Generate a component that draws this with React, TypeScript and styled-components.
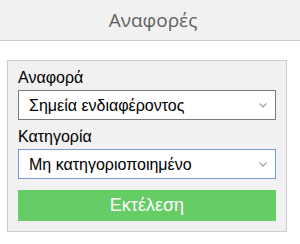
import React from "react";
import styled, { createGlobalStyle } from "styled-components";

const Global = createGlobalStyle`
  html, body { margin: 0; padding: 0; background: #ffffff; }
  body { font-family: "Liberation Sans", Arial, sans-serif; }
  * { box-sizing: border-box; }
`;

const Page = styled.div`
  width: 300px;
  height: 244px;
  display: flex;
  flex-direction: column;
  background: #ffffff;
`;

const Header = styled.header`
  height: 41px;
  background: #f1f1f1;
  border-bottom: 1px solid #cccccc;
  display: flex;
  align-items: center;
  justify-content: center;
  font-family: "Open Sans", sans-serif;
  font-size: 19px;
  color: #606060;
  padding: 0 0 1px 6px;
`;

const Panel = styled.section`
  margin: 19px 0 0 7px;
  width: 280px;
  background: #f1f1f1;
  border: 1px solid #cccccc;
  padding: 8px 10px 10px 10px;
  display: flex;
  flex-direction: column;
`;

const Label = styled.label<{ $first?: boolean }>`
  display: block;
  font-size: 16px;
  line-height: 18px;
  color: #000000;
  margin-top: ${(p) => (p.$first ? "0" : "8px")};
  margin-bottom: 3px;
`;

const SelectWrap = styled.div`
  position: relative;
  width: 258px;
  height: 30px;
`;

const Select = styled.select<{ $focused?: boolean }>`
  appearance: none;
  -webkit-appearance: none;
  width: 100%;
  height: 100%;
  margin: 0;
  padding: 0 28px 0 10px;
  font-family: "Liberation Sans", Arial, sans-serif;
  font-size: 16px;
  color: #000000;
  background: #ffffff;
  border: 1px solid ${(p) => (p.$focused ? "#7a9ad4" : "#7a7a7a")};
  border-radius: 0;
  outline: none;
`;

const Chevron = styled.svg`
  position: absolute;
  right: 9px;
  top: 13px;
  pointer-events: none;
`;

const RunButton = styled.button`
  margin-top: 11px;
  width: 258px;
  height: 31px;
  border: none;
  background: #66cc66;
  color: #ffffff;
  font-family: "Liberation Sans", Arial, sans-serif;
  font-size: 18px;
  padding: 0;
  cursor: pointer;
`;

const Arrow = () => (
  <Chevron width="8" height="5" viewBox="0 0 8 5">
    <path d="M0.5 0.5 L4 4 L7.5 0.5" fill="none" stroke="#9a9a9a" strokeWidth="1.1" />
  </Chevron>
);

export default function App() {
  return (
    <Page>
      <Global />
      <Header>Αναφορές</Header>
      <Panel>
        <Label $first htmlFor="report">Αναφορά</Label>
        <SelectWrap>
          <Select id="report" defaultValue="poi">
            <option value="poi">Σημεία ενδιαφέροντος</option>
          </Select>
          <Arrow />
        </SelectWrap>
        <Label htmlFor="category">Κατηγορία</Label>
        <SelectWrap>
          <Select id="category" $focused defaultValue="none">
            <option value="none">Μη κατηγοριοποιημένο</option>
          </Select>
          <Arrow />
        </SelectWrap>
        <RunButton>Εκτέλεση</RunButton>
      </Panel>
    </Page>
  );
}
